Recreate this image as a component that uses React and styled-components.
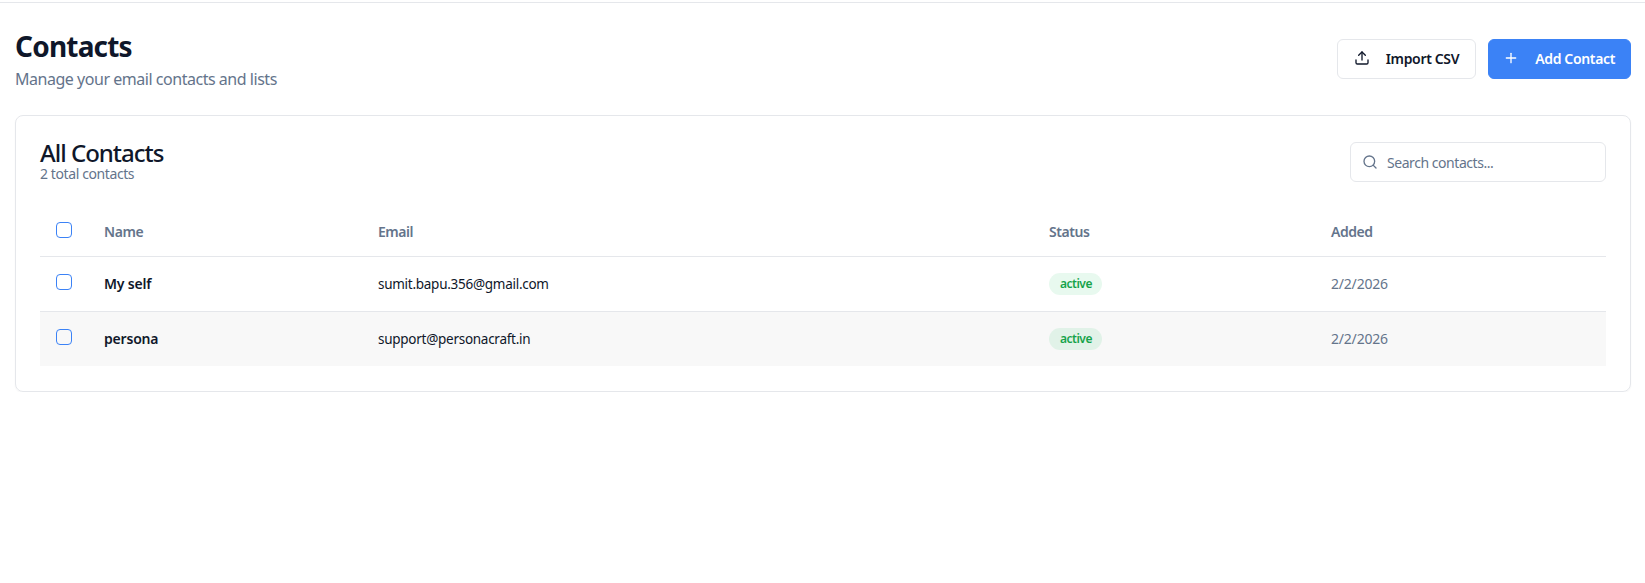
import React from 'react';
import styled, { createGlobalStyle } from 'styled-components';
import { Upload, Plus, Search } from 'lucide-react';

const Global = createGlobalStyle`
    * { box-sizing: border-box; }
    body {
        margin: 0;
        background: #ffffff;
        font-family: "Noto Sans", "Open Sans", sans-serif;
        color: #0f172a;
    }
`;

const TopLine = styled.div`
    height: 3px;
    border-bottom: 1px solid #e5e7eb;
`;

const Page = styled.main`
    padding: 25px 14px 0 15px;
`;

const Head = styled.header`
    display: flex;
    justify-content: space-between;
    align-items: flex-start;
    margin-bottom: 26px;
`;

const Title = styled.h1`
    margin: 0;
    font-size: 28px;
    line-height: 36px;
    font-weight: 700;
    letter-spacing: -0.8px;
`;

const Sub = styled.p`
    margin: 5px 0 0 0;
    font-size: 16px;
    line-height: 20px;
    color: #64748b;
    letter-spacing: -0.47px;
`;

const Actions = styled.div`
    display: flex;
    gap: 12px;
    margin-top: 11px;
`;

const Button = styled.button`
    display: flex;
    align-items: center;
    gap: 16px;
    height: 40px;
    padding: ${p => (p.$primary ? '0 15px 2px 14px' : '0 16px 2px 16px')};
    border-radius: 6px;
    font-family: inherit;
    font-size: 14px;
    font-weight: 600;
    letter-spacing: -0.35px;
    border: 1px solid ${p => (p.$primary ? '#3b82f6' : '#e5e7eb')};
    background: ${p => (p.$primary ? '#3b82f6' : '#ffffff')};
    color: ${p => (p.$primary ? '#ffffff' : '#0f172a')};
`;

const Card = styled.section`
    border: 1px solid #e5e7eb;
    border-radius: 8px;
    padding: 24px;
    box-shadow: 0 1px 2px rgba(0, 0, 0, 0.04);
`;

const CardHead = styled.div`
    display: flex;
    justify-content: space-between;
    align-items: flex-start;
    margin-bottom: 24px;
`;

const CardTitle = styled.h2`
    margin: 0;
    font-size: 24px;
    line-height: 26px;
    font-weight: 500;
    letter-spacing: -1px;
`;

const CardSub = styled.p`
    margin: 0;
    font-size: 14px;
    line-height: 16px;
    color: #64748b;
    letter-spacing: -0.4px;
`;

const SearchBox = styled.label`
    display: flex;
    align-items: center;
    gap: 7px;
    width: 256px;
    height: 40px;
    margin-top: 2px;
    padding: 0 12px 0 11px;
    border: 1px solid #e5e7eb;
    border-radius: 6px;
    color: #64748b;
`;

const SearchInput = styled.input`
    flex: 1;
    min-width: 0;
    border: 0;
    outline: 0;
    background: transparent;
    font-family: inherit;
    font-size: 14px;
    letter-spacing: -0.45px;
    &::placeholder { color: #64748b; opacity: 1; }
`;

const Table = styled.table`
    width: 100%;
    table-layout: fixed;
    border-collapse: collapse;
    font-size: 14px;
`;

const Th = styled.th`
    height: 50px;
    padding: 2px 16px 0 16px;
    text-align: left;
    font-weight: 600;
    color: #64748b;
    letter-spacing: -0.45px;
    border-bottom: 1px solid #e5e7eb;
`;

const Row = styled.tr`
    background: ${p => (p.$shaded ? '#f8f8f8' : 'transparent')};
    border-bottom: 1px solid ${p => (p.$shaded ? 'transparent' : '#e5e7eb')};
`;

const Td = styled.td`
    height: 55px;
    padding: 0 16px;
    font-size: ${p => (p.$bold || p.$muted ? 14 : 13.5)}px;
    letter-spacing: ${p => (p.$bold || p.$muted ? -0.2 : -0.27)}px;
    font-weight: ${p => (p.$bold ? 600 : 400)};
    color: ${p => (p.$muted ? '#64748b' : '#0f172a')};
`;

const Check = styled.span`
    display: block;
    width: 16px;
    height: 16px;
    margin-top: -4px;
    border: 1px solid #3b82f6;
    border-radius: 4px;
`;

const Badge = styled.span`
    display: inline-block;
    padding: 0 10px 0 11px;
    height: 22px;
    line-height: 22px;
    border-radius: 11px;
    font-size: 12px;
    font-weight: 600;
    letter-spacing: -0.5px;
    color: #16a34a;
    background: rgba(34, 197, 94, 0.1);
`;

const contacts = [
    { name: 'My self', email: 'sumit.bapu.356@gmail.com', status: 'active', added: '2/2/2026' },
    { name: 'persona', email: 'support@personacraft.in', status: 'active', added: '2/2/2026' },
];

const App = () => {
    return (
        <>
            <Global />
            <TopLine />
            <Page>
                <Head>
                    <div>
                        <Title>Contacts</Title>
                        <Sub>Manage your email contacts and lists</Sub>
                    </div>
                    <Actions>
                        <Button><Upload size={16} />Import CSV</Button>
                        <Button $primary><Plus size={16} />Add Contact</Button>
                    </Actions>
                </Head>
                <Card>
                    <CardHead>
                        <div>
                            <CardTitle>All Contacts</CardTitle>
                            <CardSub>2 total contacts</CardSub>
                        </div>
                        <SearchBox>
                            <Search size={16} />
                            <SearchInput placeholder="Search contacts..." />
                        </SearchBox>
                    </CardHead>
                    <Table>
                        <colgroup>
                            <col style={{ width: 48 }} />
                            <col style={{ width: 274 }} />
                            <col style={{ width: 671 }} />
                            <col style={{ width: 282 }} />
                            <col />
                        </colgroup>
                        <thead>
                            <tr>
                                <Th><Check /></Th>
                                <Th>Name</Th>
                                <Th>Email</Th>
                                <Th>Status</Th>
                                <Th>Added</Th>
                            </tr>
                        </thead>
                        <tbody>
                            {contacts.map((item, i) => (
                                <Row key={item.email} $shaded={i === 1}>
                                    <Td><Check /></Td>
                                    <Td $bold>{item.name}</Td>
                                    <Td>{item.email}</Td>
                                    <Td><Badge>{item.status}</Badge></Td>
                                    <Td $muted>{item.added}</Td>
                                </Row>
                            ))}
                        </tbody>
                    </Table>
                </Card>
            </Page>
        </>
    );
};

export default App;
